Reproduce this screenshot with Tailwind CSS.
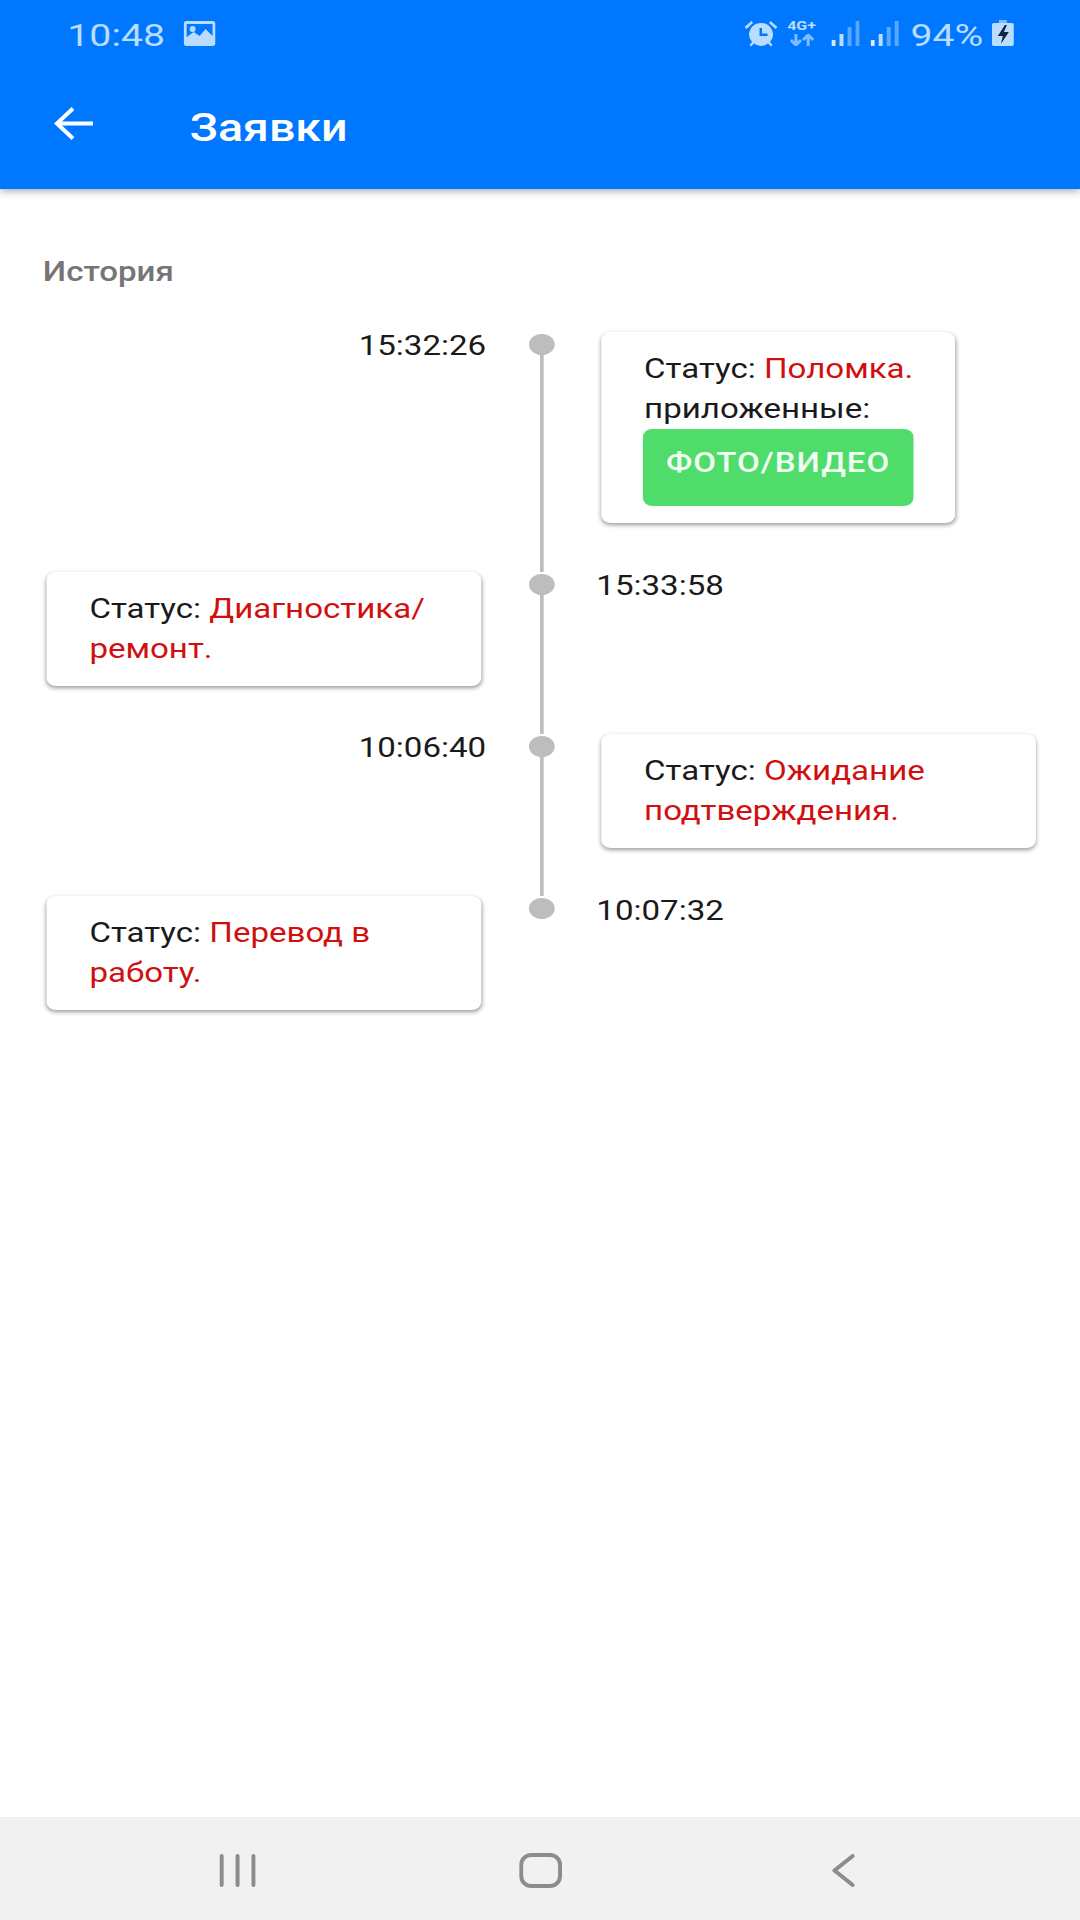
<!DOCTYPE html>
<html lang="ru">

<head>
    <meta charset="utf-8">
    <meta name="viewport" content="width=device-width, initial-scale=1">
    <title>Заявки</title>
    <script src="https://cdn.jsdelivr.net/npm/@tailwindcss/browser@4"></script>
</head>

<body class="bg-white overflow-hidden">
    <!-- the screen is 882 wide and stretched to 1080 on x, as in the screenshot -->
    <div class="w-[882px] h-[1920px] flex flex-col origin-top-left scale-x-[1.2245] font-[family-name:Roboto,sans-serif] text-[#1a1a1a]">

        <header class="h-[189px] shrink-0 bg-[#0077ff] shadow-[0_2px_7px_rgba(0,0,0,0.35)] relative z-10">
            <div class="h-[66px] flex items-center justify-between pl-[55px] pr-[54px] text-[#b9dcff]">
                <div class="flex items-center gap-[15px]">
                    <span class="text-[32px] leading-none mt-[3px]">10:48</span>
                    <svg class="w-[26px] h-[25px]" viewBox="0 0 32 25" preserveAspectRatio="none" fill="currentColor">
                        <path fill-rule="evenodd" d="M3 0h26a3 3 0 0 1 3 3v19a3 3 0 0 1-3 3H3a3 3 0 0 1-3-3V3a3 3 0 0 1 3-3zM3 3v13l7-5 6 4 6-7 7 7V3z" />
                        <circle cx="9" cy="8" r="3" />
                    </svg>
                </div>
                <div class="flex items-center">
                    <svg class="w-[27px] h-[27px]" viewBox="0 0 33 27" preserveAspectRatio="none" fill="currentColor">
                        <path fill-rule="evenodd" d="M16.500 3a12 11.500 0 0 1 9 19l2.500 3-1.500 1.500-3-3a12 11.500 0 0 1-14 0l-3 3-1.500-1.500 2.500-3a12 11.500 0 0 1 9-19zM15 8v8h8v-2.500h-5.500V8z" />
                        <path d="M0 7l7-6 1.500 2-6.500 6zM33 7l-7-6-1.500 2 6.500 6z" />
                    </svg>
                    <div class="w-[26px] ml-[7px] flex flex-col items-center">
                        <span class="text-[13px] leading-[12px] font-bold">4G+</span>
                        <svg class="w-[20px] h-[12px] mt-[2px]" viewBox="0 0 24 12" preserveAspectRatio="none" fill="none" stroke="#7fbcff" stroke-width="3">
                            <path d="M6 0v11M1 6l5 5 5-5M18 12V1M13 6l5-5 5 5" />
                        </svg>
                    </div>
                    <svg class="w-[23px] h-[25px] ml-[11px]" viewBox="0 0 28 25" preserveAspectRatio="none">
                        <rect x="0" y="19" width="4" height="6" fill="#d6eaff" />
                        <rect x="8" y="13" width="4" height="12" fill="#b9dcff" />
                        <rect x="16" y="6" width="4" height="19" fill="#5aa8ff" />
                        <rect x="24" y="0" width="4" height="25" fill="#5aa8ff" />
                    </svg>
                    <svg class="w-[23px] h-[25px] ml-[9px]" viewBox="0 0 28 25" preserveAspectRatio="none">
                        <rect x="0" y="19" width="4" height="6" fill="#d6eaff" />
                        <rect x="8" y="13" width="4" height="12" fill="#b9dcff" />
                        <rect x="16" y="6" width="4" height="19" fill="#5aa8ff" />
                        <rect x="24" y="0" width="4" height="25" fill="#5aa8ff" />
                    </svg>
                    <span class="text-[32px] leading-none ml-[10px] mt-[3px]">94%</span>
                    <svg class="w-[18px] h-[26px] ml-[7px]" viewBox="0 0 22 26" preserveAspectRatio="none">
                        <rect x="7" y="0" width="8" height="3" fill="#7fbcff" />
                        <rect x="0" y="3" width="22" height="23" rx="2" fill="#b9dcff" />
                        <path d="M13 5 6 16h5l-2 8 8-12h-5l3-7z" fill="#10263f" />
                    </svg>
                </div>
            </div>
            <div class="h-[123px] flex items-center text-white">
                <svg class="w-[32px] h-[33px] ml-[44px] mb-[8px]" viewBox="0 0 39 33" preserveAspectRatio="none" fill="none" stroke="currentColor" stroke-width="4">
                    <path d="M39 16.500H3M19 1.500 3 16.500l16 15" />
                </svg>
                <h1 class="ml-[79px] text-[38px] leading-none font-medium">Заявки</h1>
            </div>
        </header>

        <main class="flex-1 pt-[67px]">
            <p class="pl-[35px] mb-[44px] text-[27px] leading-[32px] font-medium text-[#757575]">История</p>

            <div class="grid grid-cols-[418px_48px_1fr] text-[27px]">
                <!-- 1 -->
                <div class="pt-[2px] pr-[21px] text-right leading-[24px]">15:32:26</div>
                <div class="flex flex-col items-center pt-[2px]">
                    <div class="w-[21px] h-[21px] rounded-full bg-[#bdbdbd]"></div>
                    <div class="w-[3px] flex-1 bg-[#bdbdbd]"></div>
                </div>
                <div class="pl-[25px] pb-[49px]">
                    <div class="w-[289px] rounded-lg bg-white px-[35px] py-[17px] leading-[40px] whitespace-nowrap shadow-[0_2px_4px_rgba(0,0,0,0.4)]">
                        Статус: <span class="text-[#d10f0f]">Поломка.</span><br>приложенные:
                        <button class="block w-[221px] h-[77px] -ml-px pb-[8px] rounded-lg bg-[#4fdc6a] text-[#f0fff2] text-[27px] leading-none font-medium tracking-[0.8px]">ФОТО/ВИДЕО</button>
                    </div>
                </div>

                <!-- 2 -->
                <div class="pl-[38px] pb-[48px]">
                    <div class="w-[355px] rounded-lg bg-white px-[35px] py-[17px] leading-[40px] shadow-[0_2px_4px_rgba(0,0,0,0.4)]">
                        Статус: <span class="text-[#d10f0f]">Диагностика/<br>ремонт.</span>
                    </div>
                </div>
                <div class="flex flex-col items-center pt-[2px]">
                    <div class="w-[21px] h-[21px] rounded-full bg-[#bdbdbd]"></div>
                    <div class="w-[3px] flex-1 bg-[#bdbdbd]"></div>
                </div>
                <div class="pl-[21px] pt-[2px] leading-[24px]">15:33:58</div>

                <!-- 3 -->
                <div class="pt-[2px] pr-[21px] text-right leading-[24px]">10:06:40</div>
                <div class="flex flex-col items-center pt-[2px]">
                    <div class="w-[21px] h-[21px] rounded-full bg-[#bdbdbd]"></div>
                    <div class="w-[3px] flex-1 bg-[#bdbdbd]"></div>
                </div>
                <div class="pl-[25px] pb-[48px]">
                    <div class="w-[355px] rounded-lg bg-white px-[35px] py-[17px] leading-[40px] shadow-[0_2px_4px_rgba(0,0,0,0.4)]">
                        Статус: <span class="text-[#d10f0f]">Ожидание<br>подтверждения.</span>
                    </div>
                </div>

                <!-- 4 -->
                <div class="pl-[38px]">
                    <div class="w-[355px] rounded-lg bg-white px-[35px] py-[17px] leading-[40px] shadow-[0_2px_4px_rgba(0,0,0,0.4)]">
                        Статус: <span class="text-[#d10f0f]">Перевод в<br>работу.</span>
                    </div>
                </div>
                <div class="flex flex-col items-center pt-[2px]">
                    <div class="w-[21px] h-[21px] rounded-full bg-[#bdbdbd]"></div>
                </div>
                <div class="pl-[21px] pt-[3px] leading-[24px]">10:07:32</div>
            </div>
        </main>

        <nav class="h-[103px] shrink-0 pt-[3px] bg-[#f1f1f1] flex items-center justify-center text-[#8c8c8c]">
            <div class="w-[247.500px] flex justify-center">
                <svg class="w-[30px] h-[33px]" viewBox="0 0 37 33" preserveAspectRatio="none" fill="none" stroke="currentColor" stroke-width="4" stroke-linecap="round">
                    <path d="M2.500 2v29M18.500 2v29M34.500 2v29" />
                </svg>
            </div>
            <div class="w-[247.500px] flex justify-center">
                <svg class="w-[35px] h-[35px]" viewBox="0 0 43 35" preserveAspectRatio="none" fill="none" stroke="currentColor" stroke-width="4">
                    <rect x="2" y="2" width="39" height="31" rx="10" />
                </svg>
            </div>
            <div class="w-[247.500px] flex justify-center">
                <svg class="w-[19px] h-[33px]" viewBox="0 0 23 33" preserveAspectRatio="none" fill="none" stroke="currentColor" stroke-width="4" stroke-linecap="round" stroke-linejoin="round">
                    <path d="M21 2 3 16.500 21 31" />
                </svg>
            </div>
        </nav>
    </div>
</body>

</html>
